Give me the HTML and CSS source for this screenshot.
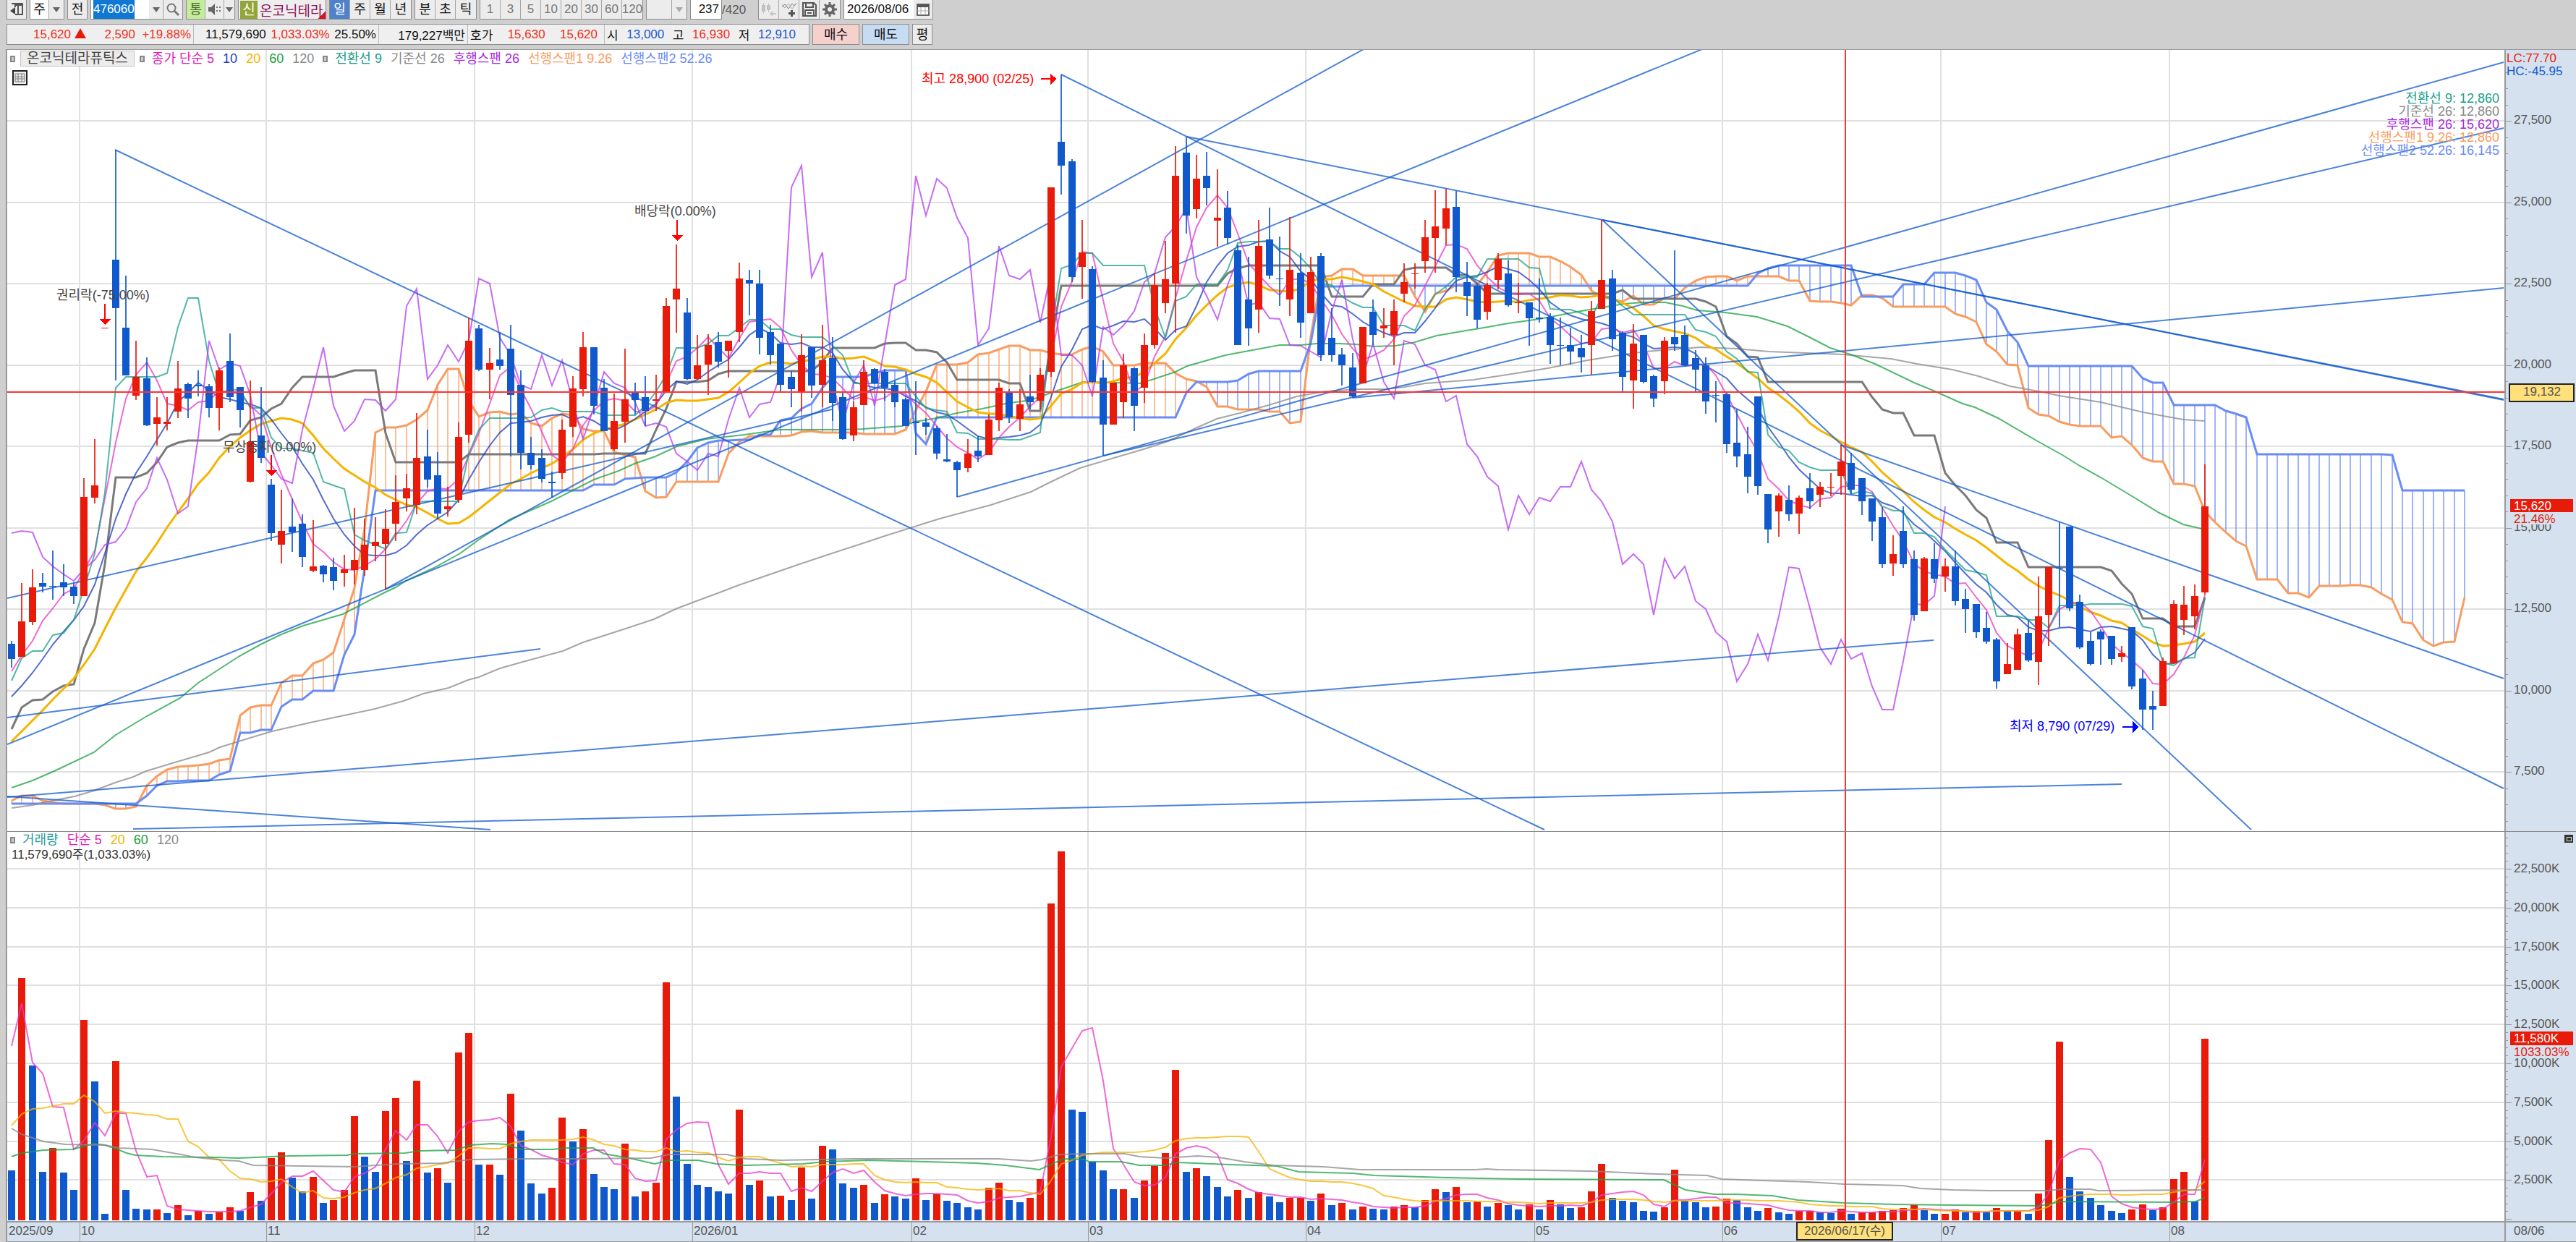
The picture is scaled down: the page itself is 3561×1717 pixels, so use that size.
FILE: index.html
```html
<!DOCTYPE html>
<html lang="ko">
<head>
  <meta charset="UTF-8" />
  <meta name="viewport" content="width=device-width, initial-scale=1.0" />
  <title>온코닉테라퓨틱스 종합차트</title>
  <link rel="stylesheet" href="styles.css">
</head>
<body>
  <header>
    <div class="toolbar">
      <button class="btn" aria-label="패널 접기">
        <svg width="20" height="20" viewBox="0 0 20 20"><path d="M5 2h13v15H8M3 2h5v5M8 4h10M12 4v13" fill="none" stroke="#555" stroke-width="2"/><path d="M1 12l7-5v10z" fill="#444"/></svg>
      </button>
      <div class="group">
        <button class="btn white">주</button><button class="btn drop" aria-label="주기 선택"><i class="caret"></i></button>
      </div>
      <button class="btn">전</button>
      <div class="group">
        <input class="code" type="text" value="476060" aria-label="종목코드"><button class="btn drop" aria-label="종목 목록"><i class="caret"></i></button><button class="btn" aria-label="종목 검색">
          <svg width="20" height="20" viewBox="0 0 20 20"><circle cx="8" cy="8" r="5.5" fill="none" stroke="#777" stroke-width="2"/><path d="M12 12l6 6" stroke="#777" stroke-width="3"/></svg>
        </button>
      </div>
      <div class="group">
        <button class="btn green">통</button><button class="btn" aria-label="소리">
          <svg width="20" height="20" viewBox="0 0 20 20"><path d="M1 7h4l5-5v16l-5-5H1z" fill="#666"/><path d="M12 6h2v2h-2zM12 11h2v2h-2zM16 6h2v2h-2zM16 11h2v2h-2z" fill="#777"/></svg>
        </button><button class="btn thin" aria-label="소리 설정"><i class="caret"></i></button>
      </div>
      <div class="group stock">
        <b class="tag">신</b><span>온코닉테라</span>
      </div>
      <div class="group periods">
        <button class="btn active">일</button><button class="btn">주</button><button class="btn">월</button><button class="btn">년</button>
      </div>
      <div class="group periods">
        <button class="btn">분</button><button class="btn">초</button><button class="btn">틱</button>
      </div>
      <div class="group periods dim">
        <button class="btn">1</button><button class="btn">3</button><button class="btn">5</button><button class="btn">10</button><button class="btn">20</button><button class="btn">30</button><button class="btn">60</button><button class="btn">120</button>
      </div>
      <div class="group dim">
        <button class="btn w36" aria-label="사용자 주기"></button><button class="btn drop" aria-label="사용자 주기 선택"><i class="caret"></i></button>
      </div>
      <div class="count">
        <input class="bars" type="text" value="237" aria-label="표시 봉수"><span>/420</span>
      </div>
      <div class="group icons">
        <button class="btn" aria-label="봉 추가">
          <svg width="22" height="22" viewBox="0 0 22 22" fill="#c2c2c2"><path d="M1 5h5v9H1zM3 2h1v15H3zM8 5h5v7H8zM10 2h1v13h-1z"/><path d="M12 17l4-4v3h5v2h-5v3z"/></svg>
        </button><button class="btn" aria-label="지표 추가">
          <svg width="22" height="22" viewBox="0 0 22 22"><path d="M1 8l4-4 5 6 5-7 3 3 3-4" fill="none" stroke="#777"/><path d="M1 4l4 5 5-6 5 7 5-6" fill="none" stroke="#aaa"/><path d="M13 12h3v3h3v3h-3v3h-3v-3h-3v-3h3z" fill="#555"/></svg>
        </button><button class="btn" aria-label="저장">
          <svg width="22" height="22" viewBox="0 0 22 22" fill="none" stroke="#555" stroke-width="2"><path d="M2 2h15l3 3v15H2zM6 2v6h10V2M5 20v-8h12v8M8 16h6"/></svg>
        </button><button class="btn" aria-label="설정">
          <svg width="22" height="22" viewBox="0 0 22 22"><circle cx="11" cy="11" r="5" fill="none" stroke="#666" stroke-width="4"/><path d="M11 1v4M11 17v4M1 11h4M17 11h4M4 4l3 3M15 15l3 3M18 4l-3 3M7 15l-3 3" stroke="#666" stroke-width="3"/></svg>
        </button>
      </div>
      <div class="group">
        <input class="date" type="text" value="2026/08/06" aria-label="기준일"><button class="btn" aria-label="달력">
          <svg width="18" height="18" viewBox="0 0 18 18"><path d="M1 2h16v15H1z" fill="#fff" stroke="#666" stroke-width="2"/><path d="M1 2h16v4H1z" fill="#555"/><path d="M1 11h16M6 6v11M12 6v11" stroke="#aaa"/></svg>
        </button>
      </div>
    </div>

    <div class="quote-row">
      <div class="quote">
        <div class="cell price"><span class="up">15,620 <i class="tri"></i></span><span class="up">2,590&nbsp; +19.88%</span></div>
        <div class="cell vol"><span>11,579,690</span><span class="up">1,033.03%</span><span>25.50%</span></div>
        <div class="cell amount"><span>179,227백만</span></div>
        <div class="cell ask"><span>호가</span><span class="up">15,630</span><span class="up">15,620</span></div>
        <div class="cell ohl"><span>시</span><span class="down">13,000</span><span>고</span><span class="up">16,930</span><span>저</span><span class="down">12,910</span></div>
      </div>
      <button class="btn order buy">매수</button>
      <button class="btn order sell">매도</button>
      <button class="btn">평</button>
    </div>
  </header>

  <main>
    <section class="pane">
      <svg id="priceChart" viewBox="10 69 3551 1080" role="img" aria-label="가격 차트"></svg>
      <div class="legend">
        <i class="sq"></i><span class="name">온코닉테라퓨틱스</span>
        <i class="sq"></i><span class="ma5">종가 단순 5</span><span class="ma10">10</span><span class="ma20">20</span><span class="ma60">60</span><span class="ma120">120</span>
        <i class="sq"></i><span class="conv">전환선 9</span><span class="base">기준선 26</span><span class="lag">후행스팬 26</span><span class="span1">선행스팬1 9.26</span><span class="span2">선행스팬2 52.26</span>
      </div>
      <button class="grid-btn" aria-label="데이터 표">
        <svg width="21" height="21" viewBox="0 0 21 21"><path d="M1 1h19v19H1z" fill="#eee" stroke="#222" stroke-width="2"/><path d="M4 5h13v11H4zM4 9h13M4 12h13M8 5v11M13 5v11" fill="none" stroke="#777"/></svg>
      </button>
    </section>
    <section class="pane volume">
      <svg id="volumeChart" viewBox="10 1150 3551 567" role="img" aria-label="거래량 차트"></svg>
      <div class="legend">
        <i class="sq"></i><span class="vol-name">거래량</span><span class="ma5">단순 5</span><span class="ma20">20</span><span class="ma60">60</span><span class="ma120">120</span>
      </div>
      <p class="vol-total">11,579,690주(1,033.03%)</p>
    </section>
  </main>

  <script src="chart.js"></script>
</body>
</html>
```

FILE: styles.css
```css
* {
  box-sizing: border-box;
}
body {
  margin: 0;
  background: #cfcfcf;
  color: #111;
  font-family: "Liberation Sans", "Noto Sans CJK KR", sans-serif;
  font-size: 17px;
}
button, input {
  font: inherit;
  color: inherit;
  padding: 0;
  margin: 0;
}
header {
  height: 68px;
  padding-left: 9px;
}

/* top toolbar */
.toolbar {
  display: flex;
  align-items: stretch;
  gap: 4px;
  height: 28px;
  padding-bottom: 1px;
}
.group {
  display: flex;
  border: 1px solid #8c8c8c;
  border-top: none;
  background: #eee;
}
.btn {
  display: flex;
  align-items: center;
  justify-content: center;
  width: 28px;
  border: 1px solid #8c8c8c;
  border-top: none;
  background: #ececec;
  font-size: 18px;
  line-height: 20px;
  white-space: nowrap;
}
.group .btn {
  width: 26px;
  border: none;
  border-right: 1px solid #a5a5a5;
}
.group .btn:last-child {
  border-right: none;
}
.group .white {
  background: #fff;
}
.group .drop {
  width: 20px;
}
.group .thin {
  width: 14px;
}
.group .w36 {
  width: 35px;
}
.caret {
  border: 5px solid transparent;
  border-top: 7px solid #666;
  border-bottom: none;
}
.dim {
  color: #777;
}
.dim .btn {
  font-size: 17px;
}
.dim .caret {
  border-top-color: #aaa;
}
.group .green {
  background: #c4ec9c;
  color: #4b6b2b;
}
.code, .bars, .date {
  border: none;
  background: #fff;
}
.code {
  width: 80px;
  padding-left: 3px;
  color: #fff;
  background: linear-gradient(90deg, #fff 3px, #0f78d4 3px, #0f78d4 60px, #fff 60px);
}
.date {
  width: 96px;
  padding-left: 4px;
}
.stock {
  align-items: center;
  gap: 3px;
  width: 122px;
  padding-left: 2px;
  font-size: 19px;
  color: #8c1458;
  background: linear-gradient(135deg, #eee 93%, #e01020 93%);
}
.tag {
  width: 24px;
  line-height: 25px;
  text-align: center;
  font-weight: normal;
  color: #fff;
  background: #93a53a;
}
.periods .btn, .icons .btn {
  width: 28px;
}
.periods .active {
  background: #4f82c8;
  color: #fff;
}
.count {
  display: flex;
  align-items: center;
  width: 90px;
}
.bars {
  width: 44px;
  height: 27px;
  padding-right: 3px;
  text-align: right;
  border: 1px solid #8c8c8c;
  border-top: none;
}
.count span {
  color: #555;
}

/* quote bar */
.quote-row {
  display: flex;
  gap: 4px;
  height: 29px;
  margin-top: 5px;
}
.quote {
  display: flex;
  width: 1110px;
  border: 1px solid #8c8c8c;
  background: #efefef;
  white-space: nowrap;
}
.cell {
  display: flex;
  align-items: center;
  justify-content: space-between;
  padding: 0 3px;
  border-right: 1px solid #bbb;
}
.cell.price {
  width: 258px;
  padding-left: 36px;
}
.cell.vol {
  width: 256px;
  padding-left: 16px;
}
.cell.amount {
  width: 123px;
  justify-content: flex-end;
}
.cell.ask {
  width: 189px;
  padding-right: 9px;
}
.cell.ohl {
  flex: 1;
  padding-right: 18px;
  border-right: none;
}
.tri {
  display: inline-block;
  border: 8px solid transparent;
  border-bottom: 14px solid #e81a0a;
  border-top: none;
}
.up {
  color: #f03020;
}
.down {
  color: #2058d0;
}
.quote-row .btn {
  border: 1px solid #8c8c8c;
}
.quote-row .order {
  width: 65px;
}
.quote-row .buy {
  background: #f6d0ca;
}
.quote-row .sell {
  background: #c5dcf2;
}

/* chart panes */
main {
  margin-left: 8px;
  border-left: 2px solid #999;
  border-top: 1px solid #999;
  background: #fff;
}
.pane {
  position: relative;
}
.pane.volume {
  border-top: 1px solid #8c8c8c;
}
.pane svg {
  display: block;
}
.pane > svg {
  width: 100%;
  height: auto;
  shape-rendering: crispEdges;
}
.pane polyline, .pane .trend {
  shape-rendering: geometricPrecision;
}
.legend {
  position: absolute;
  top: 1px;
  left: 4px;
  display: flex;
  align-items: center;
  gap: 12px;
  font-size: 18px;
  line-height: 20px;
  white-space: nowrap;
}
.legend .name {
  padding: 0 8px;
  margin: 0 -5px;
  border: 1px solid #c4c4c4;
  background: #ececec;
  color: #444;
  font-size: 19px;
}
.sq {
  width: 7px;
  height: 9px;
  border: 2px solid #888;
  background: #ccc;
}
.sq + span {
  margin-left: -2px;
}
.ma5 {
  color: #e020b8;
}
.ma10 {
  color: #1a3cc0;
}
.ma20 {
  color: #f5b400;
}
.ma60 {
  color: #18a040;
}
.ma120, .base {
  color: #888;
}
.conv {
  color: #18a088;
}
.lag {
  color: #a828e0;
}
.span1 {
  color: #fa9c60;
}
.span2 {
  color: #6a8cf5;
}
.vol-name {
  color: #289aa0;
}
.grid-btn {
  position: absolute;
  top: 28px;
  left: 7px;
  border: none;
  background: none;
}
.vol-total {
  position: absolute;
  top: 22px;
  left: 6px;
  margin: 0;
  line-height: 20px;
  color: #333;
}

/* svg text */
.axis {
  font-size: 17px;
  fill: #555;
}
.note {
  font-size: 18px;
  fill: #444;
}
.info .note {
  fill: currentColor;
}
.note.high {
  fill: #f00;
}
.note.low {
  fill: #00f;
}
.hot {
  fill: #e81a0a;
}
.inverse {
  fill: #fff;
}
.cold {
  fill: #1059cc;
}
```

FILE: chart.js
```js
const RED = '#e81a0a';
const BLUE = '#1059cc';
const GRID = '#e0e0e0';
const CROSS = '#f33';
const AXIS_BG = '#d5e1ef';
const AXIS_X = 3463;
const BASE_Y = 1687;

// open, high, low, close of each day in chart units (y grows downwards)
const days = [
  [890,886,923,911],[908,806,908,859],[860,787,864,812],[806,792,819,811],[810,761,829,811],[805,780,824,812],
  [811,805,835,824],[824,661,824,687],[688,607,696,671],[453,453,453,453],[359,207,526,426],[453,381,519,519],
  [547,471,553,521],[523,494,589,588],[586,549,616,577],[586,549,595,583],[569,499,578,537],[531,529,578,551],
  [532,512,548,534],[534,531,577,564],[564,508,595,512],[499,461,556,549],[535,535,591,567],[666,526,667,611],
  [602,535,640,633],[670,662,748,737],[753,677,779,734],[728,689,763,736],[724,711,784,770],[789,719,791,783],
  [782,781,805,794],[784,771,816,803],[792,767,811,787],[788,702,808,774],[788,717,796,753],[755,715,776,749],
  [752,704,815,731],[724,657,748,694],[689,655,707,675],[698,571,711,633],[631,594,674,663],[657,625,717,710],
  [704,673,714,700],[691,584,695,604],[601,439,612,471],[454,449,513,511],[511,481,552,502],[497,459,511,506],
  [482,449,631,546],[532,512,649,626],[626,604,649,643],[633,621,667,662],[666,652,688,668],[654,580,662,594],
  [590,520,604,537],[538,459,548,480],[480,480,573,561],[536,524,596,596],[621,544,623,582],[583,482,612,552],
  [542,529,573,553],[549,520,589,568],[554,518,568,552],[541,412,542,423],[414,338,460,399],[432,412,525,524],
  [524,463,525,505],[504,462,546,477],[473,459,508,500],[485,471,522,471],[459,363,473,385],[387,373,436,392],
  [392,373,490,467],[459,449,504,491],[475,474,543,532],[521,513,563,538],[543,462,569,491],[480,480,550,533],
  [532,449,563,498],[495,466,582,557],[549,541,608,607],[602,555,610,563],[560,498,560,514],[510,509,531,530],
  [514,510,554,536],[532,527,563,556],[552,550,589,589],[583,527,629,585],[584,578,601,590],[592,589,635,627],
  [635,600,639,638],[639,637,687,650],[647,607,653,627],[623,603,639,631],[629,573,629,580],[581,529,596,536],
  [543,538,585,577],[579,538,596,559],[548,518,565,556],[554,509,566,518],[514,259,521,259],[196,103,269,229],
  [223,220,390,383],[369,304,413,349],[372,368,529,528],[522,498,630,587],[587,529,587,529],[556,489,578,505],
  [509,508,596,561],[536,461,557,477],[477,377,482,394],[419,333,433,386],[392,202,460,243],[211,189,323,298],
  [289,214,302,247],[243,210,284,260],[305,234,341,301],[287,264,338,329],[346,338,477,477],[414,355,478,454],
  [428,304,460,340],[331,287,386,381],[385,327,423,386],[414,300,437,373],[377,350,467,446],[433,355,433,376],
  [354,350,499,491],[467,426,500,491],[490,481,533,505],[508,488,550,548],[530,452,530,452],[431,414,477,463],
  [454,426,467,450],[463,414,505,430],[406,364,418,390],[379,364,399,378],[361,304,377,328],[329,263,377,313],
  [316,261,339,288],[286,264,404,383],[390,362,437,409],[395,391,454,442],[431,391,442,394],[387,350,400,358],
  [378,360,424,422],[419,391,433,418],[418,418,478,440],[439,385,446,441],[438,433,503,477],[477,439,505,478],
  [477,453,504,486],[481,463,515,494],[477,416,518,430],[427,304,427,387],[385,373,485,469],[460,458,541,521],
  [526,448,565,475],[463,463,530,528],[520,518,563,551],[527,466,545,471],[466,346,485,476],[463,450,506,505],
  [495,484,543,511],[505,494,572,555],[546,527,584,547],[545,541,626,614],[612,566,646,631],[628,590,682,659],
  [548,548,684,672],[683,683,751,732],[707,682,742,685],[691,671,720,711],[710,685,738,688],[675,654,704,693],
  [684,666,701,673],[674,654,686,673],[658,615,684,638],[640,626,683,677],[661,661,712,693],[689,689,748,721],
  [715,701,785,780],[779,740,796,766],[734,700,785,780],[773,761,858,850],[845,770,845,772],[773,751,806,800],
  [797,772,818,783],[783,761,837,831],[828,814,875,842],[835,835,882,874],[868,846,890,887],[884,882,952,942],
  [932,889,932,918],[926,869,926,877],[875,858,915,913],[915,797,947,852],[850,784,893,784],[785,722,867,786],
  [728,728,845,841],[832,822,897,895],[886,874,920,918],[873,870,919,884],[879,879,919,911],[908,893,915,903],
  [867,867,953,949],[938,926,1009,981],[976,955,1009,981],[976,909,976,914],[917,830,918,835],[857,810,878,836],
  [852,808,870,824],[819,642,822,700]
];

const volumes = [
  69,335,214,67,100,66,42,277,192,9,220,42,16,15,15,10,21,7,13,9,11,18,13,39,27,86,94,59,40,60,24,28,42,144,88,67,
  151,169,82,193,66,72,52,232,259,77,77,63,175,124,51,37,45,142,109,126,64,46,43,106,33,40,52,329,171,78,49,46,40,
  37,153,49,55,33,34,28,73,30,103,98,51,45,49,24,36,33,30,58,28,36,27,24,18,15,45,52,28,25,31,57,438,510,153,150,
  81,69,43,43,31,55,75,93,208,67,72,61,46,33,42,31,39,33,25,31,31,27,37,21,24,15,19,16,15,19,21,18,28,43,39,46,25,
  26,19,24,21,15,22,15,28,22,17,18,40,78,31,27,25,13,12,18,70,27,25,18,19,30,28,18,13,17,11,9,13,13,11,10,16,9,11,
  11,13,14,17,21,14,9,9,15,11,13,11,17,13,13,9,37,111,247,60,40,31,21,13,10,15,22,14,18,57,67,26,251
];

// indicator values of the first visible days, which depend on earlier history
const head = {
  ma5: [928,906,886,858],
  ma10: [963,948,930,911,891,873,857,838,808],
  ma20: [1025,1011,996,982,967,952,938,919,897,869,840,815,790,771,751,729,708,689,669],
  conv: [941,910,900,900,878,875,857,814],
  base: [1008,978,968,967,956,948,946,897,861,780,660,660,660,654,639,618,612,609,609,609,609,601,600,581,577],
  span1: [1107,1100,1100,1107,1109,1111,1111,1111,1111,1113,1118,1118,1115,1086,1073,1064,1060,1059,1058,1056,1051,1049,989,978,975],
  span2: [1111,1111,1111,1111,1111,1111,1111,1111,1111,1111,1111,1111,1111,1100,1086,1080,1080,1079,1079,1079,1071,1066,1013,1013,1009,
    1009,977,967,967,955,955,955,905,877,786,678,678,678,678,678,678,678,678,678,678,678,678,678,678,678,678,678,678,678,678,678,
    670,670,670,662,661,660,660,660,653,638,619,612,609,609,608,608,601,601,581,578],
  vol5: [241,300,218,203],
  vol20: [131,147,154,155,158,161,161,173,164,148,151,149,148,146,145,140,140,109,102]
};

const ma60 = '16,1089 45,1079 75,1066 130,1040 160,1016 203,990 249,965 274,944 331,907 360,891 389,877 419,865 474,849 532,819 547,812 561,803 600,785 636,765 662,746 705,718 762,693 821,663 855,651 877,641 906,631 936,617 976,607 1029,601 1078,594 1161,594 1193,593 1220,591 1247,589 1265,583 1295,578 1323,571 1358,565 1390,558 1425,553 1453,543 1477,535 1497,528 1540,529 1576,530 1595,524 1625,514 1641,506 1694,491 1769,477 1798,477 1820,475 1851,475 1875,476 1899,479 1929,478 1956,473 1986,464 2021,458 2057,452 2085,447 2128,441 2180,431 2215,425 2245,420 2271,418 2302,418 2326,423 2346,429 2385,432 2429,438 2471,451 2503,467 2530,481 2561,491 2592,503 2646,529 2675,541 2713,558 2730,563 2762,578 2815,609 2851,629 2875,644 2904,660 2949,687 2985,709 3018,725 3048,732';
const ma120 = '16,1117 45,1113 71,1107 103,1101 130,1093 159,1082 184,1074 202,1066 245,1053 289,1040 304,1033 346,1020 376,1011 433,998 490,986 518,980 558,969 585,959 620,951 647,940 662,936 691,924 719,916 778,900 806,888 865,869 904,856 936,841 976,826 995,819 1021,809 1050,799 1108,779 1150,765 1193,751 1223,741 1299,717 1370,698 1425,680 1453,666 1493,647 1540,633 1584,620 1615,610 1655,591 1682,579 1714,571 1754,560 1793,548 1832,541 1879,538 1915,538 1942,535 1970,530 2037,525 2077,519 2140,509 2195,498 2239,491 2274,486 2314,483 2350,480 2400,482 2445,486 2547,490 2614,496 2650,503 2699,511 2735,520 2779,534 2824,542 2846,547 2904,556 2963,570 3018,580 3048,582';
const vol60 = '16,1599 30,1594 60,1590 100,1589 115,1585 130,1581 145,1583 160,1588 175,1594 187,1597 225,1599 300,1600 330,1601 400,1598 480,1597 490,1595 560,1594 580,1591 630,1590 650,1583 680,1581 700,1582 720,1589 765,1589 780,1587 820,1587 835,1595 870,1601 905,1609 925,1604 965,1604 990,1609 1030,1611 1110,1609 1140,1606 1200,1604 1280,1606 1350,1608 1390,1611 1437,1617 1470,1602 1500,1603 1505,1606 1550,1606 1575,1611 1610,1611 1628,1607 1700,1610 1765,1612 1795,1620 1870,1622 1900,1625 2000,1628 2100,1630 2300,1631 2330,1645 2370,1651 2400,1651 2450,1653 2485,1659 2550,1663 2620,1665 2700,1666 2820,1667 2850,1661 3000,1662 3035,1661 3048,1656';
const vol120 = '16,1560 30,1568 60,1578 90,1582 145,1583 165,1587 210,1589 250,1596 270,1600 310,1604 330,1605 350,1611 420,1612 490,1613 550,1609 610,1608 650,1603 730,1602 800,1602 900,1601 925,1596 1005,1596 1030,1602 1080,1604 1180,1602 1380,1602 1425,1605 1440,1603 1465,1596 1500,1595 1555,1595 1575,1599 1610,1601 1655,1598 1685,1600 1720,1606 1760,1611 1830,1613 1880,1617 2040,1617 2055,1616 2070,1617 2200,1619 2290,1623 2360,1625 2380,1630 2435,1632 2500,1634 2550,1637 2630,1639 2655,1643 2700,1645 2750,1646 2830,1646 2850,1644 2890,1644 2900,1646 3048,1645';

// trend lines drawn by the user: x1, y1, x2, y2
const trends = [
  [159,207,2135,1147],[10,827,1150,566],[532,815,1885,68],[10,1029,2353,68],[10,992,747,897],[10,1102,2673,885],
  [10,1101,678,1147],[184,1146,2933,1084],[1467,103,3461,1090],[1641,189,3461,553],[2215,304,3461,552],
  [2215,304,3112,1147],[2545,615,3461,938],[1323,687,3461,86],[1525,630,3461,177],[1870,550,3461,398]
];

const months = [[110,'10'],[368,'11'],[656,'12'],[957,'2026/01'],[1260,'02'],[1504,'03'],[1805,'04'],[2121,'05'],[2381,'06'],[2683,'07'],[2999,'08']];

const xAt = i => Math.round(15.8 + 14.37 * i);
const closes = days.map(d => d[3]);

function average(values, n, start) {
  return values.map((v, i) => {
    if (i < start.length) return start[i];
    return values.slice(i - n + 1, i + 1).reduce((a, b) => a + b, 0) / n;
  });
}

function middle(n, start) {
  return days.map((d, i) => {
    if (i < start.length) return start[i];
    const win = days.slice(Math.max(0, i - n + 1), i + 1);
    return (Math.min(...win.map(w => w[1])) + Math.max(...win.map(w => w[2]))) / 2;
  });
}

function line(x1, y1, x2, y2, color, width = 1, extra = '') {
  return `<path d="M${x1} ${y1}L${x2} ${y2}" stroke="${color}" stroke-width="${width}" ${extra}/>`;
}

function rect(x, y, w, h, color, extra = '') {
  return `<rect x="${x}" y="${y}" width="${w}" height="${h}" fill="${color}" ${extra}/>`;
}

// thin lines are two units wide and slightly transparent
function poly(points, color, width = 2) {
  return `<polyline points="${points}" fill="none" stroke="${color}" stroke-width="${width}" stroke-opacity="${width > 2 ? 1 : 0.75}"/>`;
}

function series(values, color, width) {
  return poly(values.map((v, i) => `${xAt(i)},${Math.round(v)}`).join(' '), color, width);
}

function text(x, y, str, cls = 'axis', anchor = 'start') {
  return `<text x="${x}" y="${y}" class="${cls}" text-anchor="${anchor}">${str}</text>`;
}

function downArrow(x, y) {
  return line(x, y, x, y + 22, '#f00', 2) + `<path d="M${x - 8} ${y + 21}h16l-8 8z" fill="#f00"/>`;
}

function drawPrice() {
  const conv = middle(9, head.conv);
  const base = middle(26, head.base);
  const mid52 = middle(52, []);
  const span1 = head.span1.concat(conv.map((v, i) => (v + base[i]) / 2));
  const span2 = head.span2.concat(mid52.slice(51));
  let out = '';

  for (let i = 0; i < 9; i++) out += line(10, Math.round(167 + 112.5 * i), AXIS_X, Math.round(167 + 112.5 * i), GRID, 2);
  months.forEach(m => { out += line(m[0], 69, m[0], 1149, GRID, 2); });

  span1.forEach((a, i) => {
    out += line(xAt(i), Math.round(a), xAt(i), Math.round(span2[i]), a < span2[i] ? '#fa9c60' : '#6a8cf5', 2, 'stroke-opacity="0.65"');
  });
  out += series(span1, '#fa9c60', 3) + series(span2, '#6a8cf5', 3);
  out += poly(ma120, '#888') + poly(ma60, '#18a040');
  out += series(base, '#7a7a7a', 3);
  out += series(average(closes, 20, head.ma20), '#f5b400', 3);
  out += series(average(closes, 10, head.ma10), '#1a3cc0');
  out += series(average(closes, 5, head.ma5), '#e838c8');
  out += series(conv, '#18a088');
  out += series(closes.slice(25), '#b43cf0');
  trends.forEach(t => { out += line(...t, BLUE, 2, 'class="trend" stroke-opacity="0.75"'); });

  days.forEach(([o, h, l, c], i) => {
    const color = c > o ? BLUE : RED;
    out += rect(xAt(i) - 1, h, 2, Math.max(1, l - h), color, 'fill-opacity="0.85"');
    out += rect(xAt(i) - 5, Math.min(o, c), 10, Math.max(1, Math.abs(c - o)), color);
  });

  out += line(10, 542, AXIS_X, 542, CROSS, 2) + line(2551, 69, 2551, 1149, CROSS, 2);

  out += text(1274, 115, '최고 28,900 (02/25)', 'note high') + line(1439, 109, 1453, 109, '#f00', 2) + '<path d="M1452 102v15l9-8z" fill="#f00"/>';
  out += text(2778, 1010, '최저 8,790 (07/29)', 'note low') + line(2934, 1005, 2948, 1005, '#00f', 2) + '<path d="M2948 997v16l9-8z" fill="#00f"/>';
  out += text(78, 414, '권리락(-75.00%)', 'note') + downArrow(145, 420);
  out += text(308, 624, '무상증자(0.00%)', 'note') + downArrow(375, 629);
  out += text(877, 298, '배당락(0.00%)', 'note') + downArrow(936, 304);

  [['전환선 9: 12,860', 'conv'], ['기준선 26: 12,860', 'base'], ['후행스팬 26: 15,620', 'lag'],
   ['선행스팬1 9.26: 12,860', 'span1'], ['선행스팬2 52.26: 16,145', 'span2']].forEach(([str, cls], i) => {
    out += `<g class="info ${cls}">` + text(3455, 142 + 18 * i, str, 'note', 'end') + '</g>';
  });

  // right axis
  out += rect(AXIS_X, 69, 98, 1080, AXIS_BG) + line(AXIS_X, 69, AXIS_X, 1149, '#999', 2);
  for (let i = -3; i < 45; i++) {
    const y = Math.round(167 + 22.5 * i);
    out += line(AXIS_X, y, AXIS_X + (i % 5 === 0 ? 9 : 4), y, '#999');
    if (i >= 0 && i % 5 === 0 && i <= 40) out += text(3475, y + 4, (27500 - 500 * i).toLocaleString('en-US'));
  }
  out += text(3465, 86, 'LC:77.70', 'axis hot') + text(3465, 104, 'HC:-45.95', 'axis cold');
  out += rect(3469, 531, 89, 24, '#ffe07a', 'stroke="#222" stroke-width="2"') + text(3514, 547, '19,132', 'axis', 'middle');
  out += rect(3474, 708, 83, 17, AXIS_BG) + rect(3470, 690, 87, 18, RED);
  out += text(3475, 705, '15,620', 'axis inverse') + text(3475, 723, '21.46%', 'axis hot');
  document.getElementById('priceChart').innerHTML = out;
}

function drawVolume() {
  let out = '';
  const y0 = 1201;
  for (let i = 0; i < 9; i++) out += line(10, Math.round(y0 + 53.8 * i), AXIS_X, Math.round(y0 + 53.8 * i), GRID, 2);
  months.forEach(m => { out += line(m[0], 1150, m[0], 1689, GRID, 2); });

  volumes.forEach((v, i) => {
    out += rect(xAt(i) - 5, BASE_Y - v, 10, v, i > 0 && v >= volumes[i - 1] ? RED : BLUE);
  });
  const toY = values => values.map(v => BASE_Y - v);
  out += series(toY(average(volumes, 5, head.vol5)), '#e838c8');
  out += series(toY(average(volumes, 20, head.vol20)), '#f5b400');
  out += poly(vol60, '#18a040') + poly(vol120, '#888');
  out += line(2551, 1150, 2551, 1689, CROSS, 2);

  // right axis
  out += rect(AXIS_X, 1150, 98, 567, AXIS_BG);
  for (let i = -4; i < 46; i++) {
    const y = Math.round(y0 + 10.76 * i);
    out += line(AXIS_X, y, AXIS_X + (i % 5 === 0 ? 9 : 4), y, '#999');
    if (i >= 0 && i % 5 === 0 && i <= 40) out += text(3475, y + 5, (22500 - 500 * i).toLocaleString('en-US') + 'K');
  }
  out += rect(3474, 1445, 83, 18, AXIS_BG) + rect(3470, 1426, 87, 19, RED);
  out += text(3475, 1441, '11,580K', 'axis inverse') + text(3475, 1460, '1033.03%', 'axis hot');
  out += rect(3545, 1154, 12, 11, '#333') + '<path d="M3548 1157h6v5h-6z" fill="none" stroke="#ddd"/>';

  // date axis
  out += rect(10, 1689, 3551, 28, AXIS_BG) + line(10, 1689, 3561, 1689, '#999', 2) + line(10, 1716, 3561, 1716, '#999');
  out += text(12, 1707, '2025/09');
  months.forEach(m => { out += line(m[0], 1690, m[0], 1716, '#999') + text(m[0] + 2, 1707, m[1]); });
  out += rect(2484, 1690, 132, 24, '#ffe07a', 'stroke="#222" stroke-width="2"') + text(2550, 1707, '2026/06/17(수)', 'axis', 'middle');
  out += line(AXIS_X, 1150, AXIS_X, 1716, '#999', 2) + text(3475, 1707, '08/06');
  document.getElementById('volumeChart').innerHTML = out;
}

drawPrice();
drawVolume();
```
